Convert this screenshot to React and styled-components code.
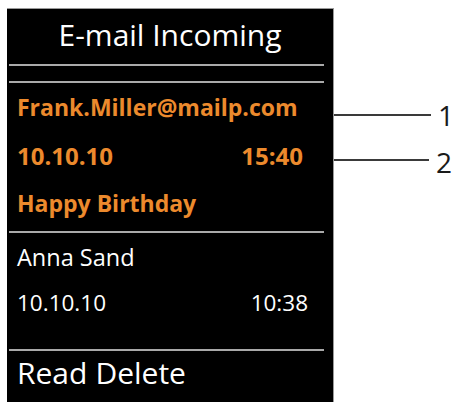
import React from 'react';
import styled, { createGlobalStyle } from 'styled-components';

const GlobalStyle = createGlobalStyle`
  html, body {
    margin: 0;
    padding: 0;
    background: #ffffff;
  }
  body {
    font-family: 'Open Sans', 'Liberation Sans', sans-serif;
  }
`;

const Page = styled.div`
  display: flex;
  align-items: flex-start;
  width: 456px;
  height: 404px;
  padding: 8px 0 0 7px;
  box-sizing: border-box;
`;

const Screen = styled.div`
  width: 327px;
  height: 394px;
  box-sizing: border-box;
  background: #000000;
  border-top: 1px solid #9a9a9a;
  border-right: 1px solid #9a9a9a;
  display: flex;
  flex-direction: column;
  color: #ffffff;
`;

const Title = styled.div`
  height: 55px;
  padding-bottom: 4px;
  box-sizing: border-box;
  display: flex;
  align-items: center;
  justify-content: center;
  font-size: 30px;
  font-weight: 400;
`;

const Divider = styled.div`
  height: 2px;
  margin: 0 9px 0 2px;
  background: #a9a9a9;
  flex: none;
`;

const Spacer = styled.div`
  height: ${(p) => p.$h}px;
  flex: none;
`;

const Row = styled.div`
  height: ${(p) => p.$h}px;
  flex: none;
  display: flex;
  align-items: center;
  justify-content: space-between;
  padding: 0 ${(p) => p.$right || 25}px 0 10px;
  font-size: ${(p) => p.$size || 23}px;
  font-weight: ${(p) => (p.$active ? 700 : 400)};
  color: ${(p) => (p.$active ? '#ec8a2d' : '#ffffff')};
  white-space: nowrap;
`;

const SoftKeys = styled.div`
  height: 51px;
  padding: 0 0 9px 10px;
  box-sizing: border-box;
  display: flex;
  align-items: center;
  gap: 8px;
  font-size: 30px;
`;

const Callouts = styled.div`
  display: flex;
  flex-direction: column;
  padding-top: 92px;
  gap: 15px;
`;

const Callout = styled.div`
  height: 30px;
  display: flex;
  align-items: center;
`;

const Leader = styled.div`
  width: ${(p) => p.$w}px;
  height: 2px;
  background: #3a3a3a;
  margin-right: 7px;
`;

const Label = styled.span`
  font-size: 28px;
  line-height: 1;
  color: #1a1a1a;
  margin-top: ${(p) => p.$dy || 0}px;
`;

export default function App() {
  return (
    <>
      <GlobalStyle />
      <Page>
        <Screen>
          <Title>E-mail Incoming</Title>
          <Divider />
          <Spacer $h={15} />
          <Divider />
          <Row $h={48} $active $size={23}>Frank.Miller@mailp.com</Row>
          <Row $h={48} $active $right={30} $size={24}>
            <span>10.10.10</span>
            <span>15:40</span>
          </Row>
          <Row $h={48} $active>Happy Birthday</Row>
          <Spacer $h={4} />
          <Divider />
          <Row $h={48} $size={23.5}>Anna Sand</Row>
          <Row $h={42} $size={22.5}>
            <span>10.10.10</span>
            <span>10:38</span>
          </Row>
          <Spacer $h={26} />
          <Divider />
          <SoftKeys>
            <span>Read</span>
            <span>Delete</span>
          </SoftKeys>
        </Screen>
        <Callouts>
          <Callout>
            <Leader $w={97} />
            <Label>1</Label>
          </Callout>
          <Callout>
            <Leader $w={95} />
            <Label $dy={4}>2</Label>
          </Callout>
        </Callouts>
      </Page>
    </>
  );
}
